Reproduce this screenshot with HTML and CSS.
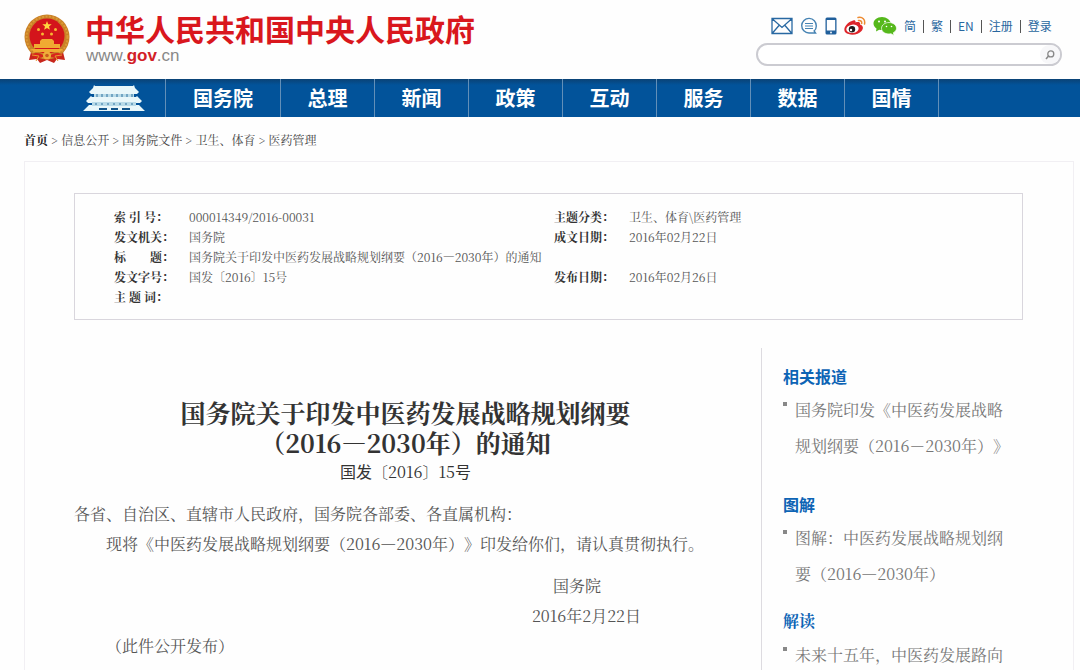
FILE: index.html
```html
<!DOCTYPE html>
<html lang="zh-CN">
<head>
<meta charset="utf-8">
<meta name="viewport" content="width=device-width, initial-scale=1">
<title>国务院关于印发中医药发展战略规划纲要（2016—2030年）的通知</title>
<link rel="stylesheet" href="styles.css">
</head>
<body>
<header class="header">
  <div class="brand">
    <svg class="emblem" viewBox="0 0 46 50" aria-hidden="true">
      <path d="M7 38L5 46l8-1 3 4 7-3 7 3 3-4 8 1-2-8z" fill="#c8261c"/>
      <circle cx="23" cy="23" r="22.500" fill="#c98128"/>
      <circle cx="23" cy="23" r="20.500" fill="none" stroke="#dc9a35" stroke-width="2" stroke-dasharray="2 1.500"/>
      <circle cx="23" cy="22" r="17.500" fill="#d4141b"/>
      <path d="M23 7l1.200 3.200 3.500.1-2.700 2.200.9 3.300-2.900-1.900-2.900 1.900.9-3.300-2.700-2.200 3.500-.1z" fill="#ffd63f"/>
      <g fill="#f8b832"><circle cx="14.500" cy="15.500" r="1.500"/><circle cx="31.500" cy="15.500" r="1.500"/><circle cx="18.500" cy="20" r="1.500"/><circle cx="27.500" cy="20" r="1.500"/></g>
      <path d="M16 27l2-2h10l2 2v3h6v4H10v-4h6zM7 35h32l-3 3H10z" fill="#f0ab32"/>
      <path d="M8 40c5-2 8-1 11 1h8c3-2 6-3 11-1l-3 5-8-2-4 3-4-3-8 2z" fill="#d8241c"/>
      <circle cx="23" cy="41.500" r="4" fill="#efae3a"/><circle cx="23" cy="41.500" r="1.800" fill="#c95c1d"/>
      <path d="M8 41l7 1-3 5M38 41l-7 1 3 5" fill="none" stroke="#e89a2d" stroke-width="1"/>
    </svg>
    <div class="brand-text">
      <h1 class="brand-name">中华人民共和国中央人民政府</h1>
      <div class="brand-url">www.<strong>gov</strong>.cn</div>
    </div>
  </div>
  <div class="tools">
    <div class="quick">
      <a href="#" aria-label="邮箱"><svg class="icon" width="22" height="18" viewBox="0 0 22 18"><path d="M1 1.500h20v15H1zM1.500 2l9.500 8.500L20.500 2M1.500 16l6.500-7.500M20.500 16L14 8.500" fill="none" stroke="#2868a2" stroke-width="1.300"/></svg></a>
      <a href="#" aria-label="留言"><svg class="icon" width="18" height="18" viewBox="0 0 18 18"><path d="M15.500 16H9A7.300 7.300 0 1 1 16.300 9c0 2-.7 3.800-2.200 5z" fill="none" stroke="#4683b3" stroke-width="1.400"/><path d="M5 6.500h8M5 9h8M5 11.500h8" stroke="#4683b3" stroke-width="1.100"/></svg></a>
      <a href="#" aria-label="客户端"><svg class="icon" width="12" height="18" viewBox="0 0 12 18"><rect x=".5" y=".5" width="11" height="17" rx="1.500" fill="#205f9b"/><path d="M1.800 3h8.400v10.500H1.800z" fill="#fff"/><circle cx="6" cy="15.500" r=".9" fill="#fff"/></svg></a>
      <a href="#" aria-label="微博"><svg class="icon" width="22" height="20" viewBox="0 0 22 20"><path d="M8 5c2-1.500 4-.8 3.500 1.500C14 5.500 17 6 16 8.500c3 .8 4 3.500 1.500 6.500-3 4-12 5-16 1.500C-2 13 3 6.500 8 5z" fill="#de252a"/><ellipse cx="8.500" cy="12.800" rx="6.200" ry="4.200" transform="rotate(-8 8.500 13)" fill="#fff"/><circle cx="8" cy="13.200" r="3.200" fill="#211c1c"/><circle cx="7" cy="14" r="1.200" fill="#fff"/><path d="M14 1.500c4.500-1 7.500 2 6.500 6.500M14.500 4.500c2.300-.4 3.500 1 3.200 3" fill="none" stroke="#ed8b32" stroke-width="1.500" stroke-linecap="round"/></svg></a>
      <a href="#" aria-label="微信"><svg class="icon" width="24" height="20" viewBox="0 0 24 20"><path d="M9 1C4 1 .5 4 .5 7.500c0 2 1.200 3.800 3 5L3 15.500l3.200-1.700c1 .3 2 .3 3 .3L18 8C17.500 4 13.500 1 9 1z" fill="#55b81b"/><path d="M16 6.500c-4 0-7.500 2.500-7.500 5.800s3.300 5.700 7.500 5.700l2-.3 3 1.800-.7-2.800c2-1 3.200-2.700 3.200-4.500C23.500 9 20 6.500 16 6.500z" fill="#55b81b" stroke="#fff" stroke-width=".7"/><g fill="#fff"><circle cx="6" cy="5.500" r="1"/><circle cx="12" cy="5.500" r="1"/><circle cx="13.500" cy="10.500" r=".8"/><circle cx="18.500" cy="10.500" r=".8"/></g></svg></a>
      <nav class="links" aria-label="快捷链接"><a href="#">简</a><i></i><a href="#">繁</a><i></i><a href="#">EN</a><i></i><a href="#">注册</a><i></i><a href="#">登录</a></nav>
    </div>
    <form class="search">
      <input class="search-input" type="search" aria-label="搜索">
      <button class="search-button" type="button" aria-label="搜索"><svg width="10" height="10" viewBox="0 0 10 10"><circle cx="5.800" cy="3.900" r="3" fill="none" stroke="#888" stroke-width="1.300"/><path d="M3.500 6L1 9" stroke="#888" stroke-width="1.500"/></svg></button>
    </form>
  </div>
</header>
<nav class="nav" aria-label="主导航">
  <a class="nav-home" href="#" aria-label="首页">
    <svg width="64" height="28" viewBox="0 0 64 28">
      <path d="M13 2h38l1-1 1 3 4 4-2 2H9L7 8l4-4 1-3zM10 13h44l1-1 5 5-2 2H6l-2-2 5-5zM7 21h50l6 6H1z" fill="#e9f7fa"/>
      <path d="M12 10h40v3H12zM10 18h44v4H10z" fill="#b9dbe8"/>
      <path d="M15 10v3M20 10v3M25 10v3M30 10v3M35 10v3M40 10v3M45 10v3M50 10v3M14 19v2M20 19v2M26 19v2M32 19v2M38 19v2M44 19v2M50 19v2" stroke="#2d719f" stroke-width="1"/>
      <path d="M17 24h8v2h-8zM29 24h7v2h-7zM40 24h8v2h-8z" fill="#14568b"/>
    </svg>
  </a>
  <a class="nav-wide" href="#">国务院</a><a href="#">总理</a><a href="#">新闻</a><a href="#">政策</a><a href="#">互动</a><a href="#">服务</a><a href="#">数据</a><a href="#">国情</a>
</nav>
<nav class="crumbs" aria-label="当前位置"><a class="crumb-home" href="#">首页</a> &gt; <a href="#">信息公开</a> &gt; <a href="#">国务院文件</a> &gt; <a href="#">卫生、体育</a> &gt; <a href="#">医药管理</a></nav>
<main class="page">
  <div class="meta">
    <table class="meta-table">
      <colgroup><col class="col-label"><col class="col-value"><col class="col-label"><col></colgroup>
      <tr><th>索 引 号：</th><td>000014349/2016-00031</td><th>主题分类：</th><td>卫生、体育\医药管理</td></tr>
      <tr><th>发文机关：</th><td>国务院</td><th>成文日期：</th><td>2016年02月22日</td></tr>
      <tr><th>标　　题：</th><td colspan="3">国务院关于印发中医药发展战略规划纲要（2016—2030年）的通知</td></tr>
      <tr><th>发文字号：</th><td>国发〔2016〕15号</td><th>发布日期：</th><td>2016年02月26日</td></tr>
      <tr><th>主 题 词：</th><td colspan="3"></td></tr>
    </table>
  </div>
  <div class="columns">
    <article class="article">
      <h2 class="title">国务院关于印发中医药发展战略规划纲要<br>（2016—2030年）的通知</h2>
      <p class="number"><span class="sans">国发</span>〔2016〕15<span class="sans">号</span></p>
      <p>各省、自治区、直辖市人民政府，国务院各部委、各直属机构：</p>
      <p class="indent">现将《中医药发展战略规划纲要（2016—2030年）》印发给你们，请认真贯彻执行。</p>
      <div class="signature"><p class="signer">国务院</p><p>2016年2月22日</p></div>
      <p class="indent">（此件公开发布）</p>
    </article>
    <aside class="aside">
      <section class="related"><h3>相关报道</h3><ul><li><a href="#">国务院印发《中医药发展战略规划纲要（2016－2030年）》</a></li></ul></section>
      <section class="related related-tight"><h3>图解</h3><ul><li><a href="#">图解：中医药发展战略规划纲要（2016—2030年）</a></li></ul></section>
      <section class="related"><h3 class="serif">解读</h3><ul><li><a href="#">未来十五年，中医药发展路向</a></li></ul></section>
    </aside>
  </div>
</main>
</body>
</html>
```
FILE: styles.css
```css
* { box-sizing: border-box; }
body {
  margin: 0;
  background: #fefefe;
  color: #555;
  font-family: "Noto Serif CJK SC", "Noto Serif SC", "Noto Sans CJK SC", serif;
  font-size: 16px;
  line-height: 30px;
  text-spacing-trim: space-all;
}
h1, h2, h3, p, ul { margin: 0; padding: 0; }
a { color: inherit; text-decoration: none; }

.header {
  display: flex;
  justify-content: space-between;
  padding: 10px 18px 0 24px;
  height: 79px;
}
.brand { display: flex; gap: 15px; }
.emblem { width: 46px; height: 50px; margin-top: 4px; }
.brand-name {
  color: #d9171d;
  font: 700 30px/36px "Noto Sans CJK SC", sans-serif;
}
.brand-url { padding-left: 1px; color: #888; font: 17px/20px "Liberation Sans", sans-serif; }
.brand-url strong { color: #d22027; }
.tools { display: flex; flex-direction: column; gap: 3px; padding-top: 2px; }
.quick { display: flex; align-items: center; gap: 7px; height: 28px; margin-left: 15px; }
.icon { display: block; }
.links {
  display: flex;
  align-items: center;
  gap: 7px;
  color: #28679f;
  font: 12px/20px "Noto Sans CJK SC", sans-serif;
}
.links i { width: 1px; height: 13px; background: #555; }
.search {
  display: flex;
  width: 306px;
  height: 23px;
  border: 2px solid #cbcbd1;
  border-radius: 12px;
  background: #fff;
}
.search-input { flex: 1; min-width: 0; border: 0; padding: 0 10px; outline: 0; background: none; }
.search-button { display: flex; align-items: center; border: 0; padding: 0 5px; border-radius: 10px; background: #f7f7f9; }

.nav {
  display: flex;
  height: 38px;
  background: linear-gradient(#0b4275, #02539a 6px);
  color: #fff;
  font: 700 20px/38px "Noto Sans CJK SC", sans-serif;
}
.nav a { width: 94px; border-right: 1px solid #628fb8; text-align: center; }
.nav .nav-home { display: flex; align-items: center; justify-content: flex-end; width: 166px; padding-right: 19px; }
.nav .nav-wide { width: 115px; }

.crumbs { padding: 8px 24px 0; height: 44px; color: #444; font-size: 12px; white-space: nowrap; }
.crumb-home { color: #222; font-weight: 700; }
.page { margin: 0 6px 0 24px; padding: 31px 50px 31px 49px; border: 1px solid #f1eff3; }
.meta { padding: 13px 39px 12px; border: 1px solid #d9d6dd; }
.meta-table { width: 100%; border-collapse: collapse; table-layout: fixed; font-size: 12px; line-height: 20px; }
.meta-table th, .meta-table td { height: 20px; padding: 0; text-align: left; white-space: nowrap; }
.meta-table th { color: #333; font-weight: 700; }
.col-label { width: 75px; }
.col-value { width: 365px; }

.columns { display: flex; gap: 24px; margin-top: 28px; }
.article { flex: 1; padding-top: 49px; }
.title { color: #333; font-size: 25px; line-height: 30px; text-align: center; font-weight: 700; }
.number { margin-bottom: 13px; color: #333; text-align: center; line-height: 28px; }
.sans { font-family: "Noto Sans CJK SC", sans-serif; }
.indent { padding-left: 32px; }
.signature { padding: 12px 96px 0 0; text-align: right; }
.signer { padding-right: 40px; }
.aside { width: 262px; padding: 12px 0 0 21px; border-left: 1px solid #dddbe0; }
.related { margin-bottom: 24px; }
.related-tight { margin-bottom: 13px; }
.related h3 { color: #0d64b5; font: 700 16px/32px "Noto Sans CJK SC", sans-serif; }
.related h3.serif { font-family: "Noto Serif CJK SC", "Noto Serif SC", "Noto Sans CJK SC", serif; }
.related ul { width: 232px; list-style: none; }
.related li { display: flex; gap: 8px; color: #777; line-height: 36px; }
.related li::before { content: ""; flex: none; width: 4px; height: 4px; margin-top: 10px; background: #888; }
```
